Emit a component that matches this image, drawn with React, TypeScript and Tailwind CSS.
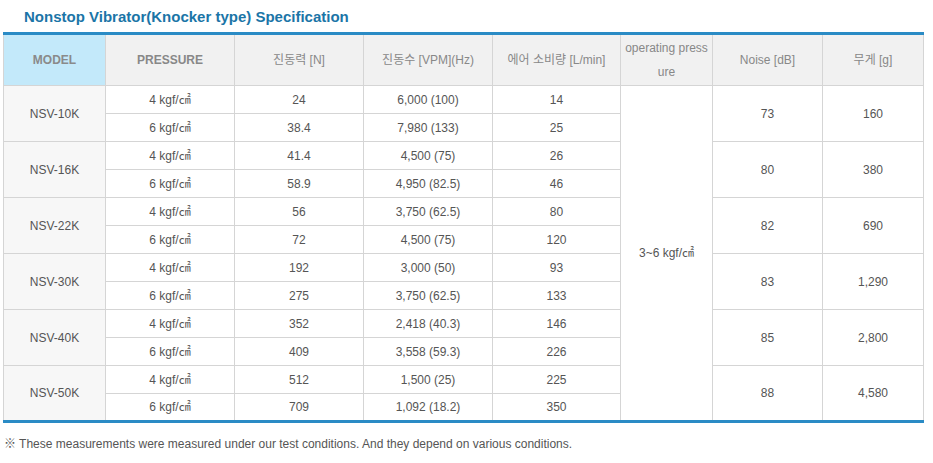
import React from 'react';

type Spec = {
  model: string;
  rows: { pressure: string; force: string; freq: string; air: string }[];
  noise: string;
  weight: string;
};

const specs: Spec[] = [
  { model: 'NSV-10K', noise: '73', weight: '160', rows: [
    { pressure: '4 kgf/㎠', force: '24', freq: '6,000 (100)', air: '14' },
    { pressure: '6 kgf/㎠', force: '38.4', freq: '7,980 (133)', air: '25' },
  ] },
  { model: 'NSV-16K', noise: '80', weight: '380', rows: [
    { pressure: '4 kgf/㎠', force: '41.4', freq: '4,500 (75)', air: '26' },
    { pressure: '6 kgf/㎠', force: '58.9', freq: '4,950 (82.5)', air: '46' },
  ] },
  { model: 'NSV-22K', noise: '82', weight: '690', rows: [
    { pressure: '4 kgf/㎠', force: '56', freq: '3,750 (62.5)', air: '80' },
    { pressure: '6 kgf/㎠', force: '72', freq: '4,500 (75)', air: '120' },
  ] },
  { model: 'NSV-30K', noise: '83', weight: '1,290', rows: [
    { pressure: '4 kgf/㎠', force: '192', freq: '3,000 (50)', air: '93' },
    { pressure: '6 kgf/㎠', force: '275', freq: '3,750 (62.5)', air: '133' },
  ] },
  { model: 'NSV-40K', noise: '85', weight: '2,800', rows: [
    { pressure: '4 kgf/㎠', force: '352', freq: '2,418 (40.3)', air: '146' },
    { pressure: '6 kgf/㎠', force: '409', freq: '3,558 (59.3)', air: '226' },
  ] },
  { model: 'NSV-50K', noise: '88', weight: '4,580', rows: [
    { pressure: '4 kgf/㎠', force: '512', freq: '1,500 (25)', air: '225' },
    { pressure: '6 kgf/㎠', force: '709', freq: '1,092 (18.2)', air: '350' },
  ] },
];

const cell = 'border border-[#d5d5d5] text-center align-middle';
const head = `${cell} bg-[#f1f1f1] text-[#888] border-t-0`;

export default function App() {
  return (
    <div className="w-[933px] h-[463px] bg-white text-[12px] text-[#555] font-['Liberation_Sans','Noto_Sans_CJK_KR',sans-serif]">
      <h2 className="pl-[24px] pt-[7px] h-[32px] text-[15px] font-bold leading-[20px] text-[#1b75a7]">
        Nonstop Vibrator(Knocker type) Specification
      </h2>
      <table className="ml-[3px] w-[920px] table-fixed border-collapse border-t-[3px] border-b-[3px] border-t-[#2a8bc5] border-b-[#2a8bc5]">
        <colgroup>
          <col className="w-[102px]" />
          <col className="w-[129px]" />
          <col className="w-[129px]" />
          <col className="w-[129px]" />
          <col className="w-[128px]" />
          <col className="w-[92px]" />
          <col className="w-[110px]" />
          <col className="w-[101px]" />
        </colgroup>
        <thead>
          <tr className="h-[52px]">
            <th className={`${cell} bg-[#c3e9fa] text-[#8a8a8a] font-bold border-t-0`}>MODEL</th>
            <th className={`${head} font-bold`}>PRESSURE</th>
            <th className={`${head} font-normal`}>진동력 [N]</th>
            <th className={`${head} font-normal`}>진동수 [VPM](Hz)</th>
            <th className={`${head} font-normal`}>에어 소비량 [L/min]</th>
            <th className={`${head} font-normal leading-[24px] break-all px-[4px]`}>operating pressure</th>
            <th className={`${head} font-normal`}>Noise [dB]</th>
            <th className={`${head} font-normal`}>무게 [g]</th>
          </tr>
        </thead>
        <tbody>
          {specs.map((s, i) =>
            s.rows.map((r, j) => (
              <tr key={`${s.model}-${j}`} className="h-[28px]">
                {j === 0 && (
                  <td rowSpan={2} className={`${cell} bg-[#f7f7f7]`}>{s.model}</td>
                )}
                <td className={cell}>{r.pressure}</td>
                <td className={cell}>{r.force}</td>
                <td className={cell}>{r.freq}</td>
                <td className={cell}>{r.air}</td>
                {i === 0 && j === 0 && (
                  <td rowSpan={12} className={cell}>3~6 kgf/㎠</td>
                )}
                {j === 0 && (
                  <>
                    <td rowSpan={2} className={cell}>{s.noise}</td>
                    <td rowSpan={2} className={cell}>{s.weight}</td>
                  </>
                )}
              </tr>
            ))
          )}
        </tbody>
      </table>
      <p className="pl-[4px] pt-[13px] leading-[16px]">
        ※ These measurements were measured under our test conditions. And they depend on various conditions.
      </p>
    </div>
  );
}
